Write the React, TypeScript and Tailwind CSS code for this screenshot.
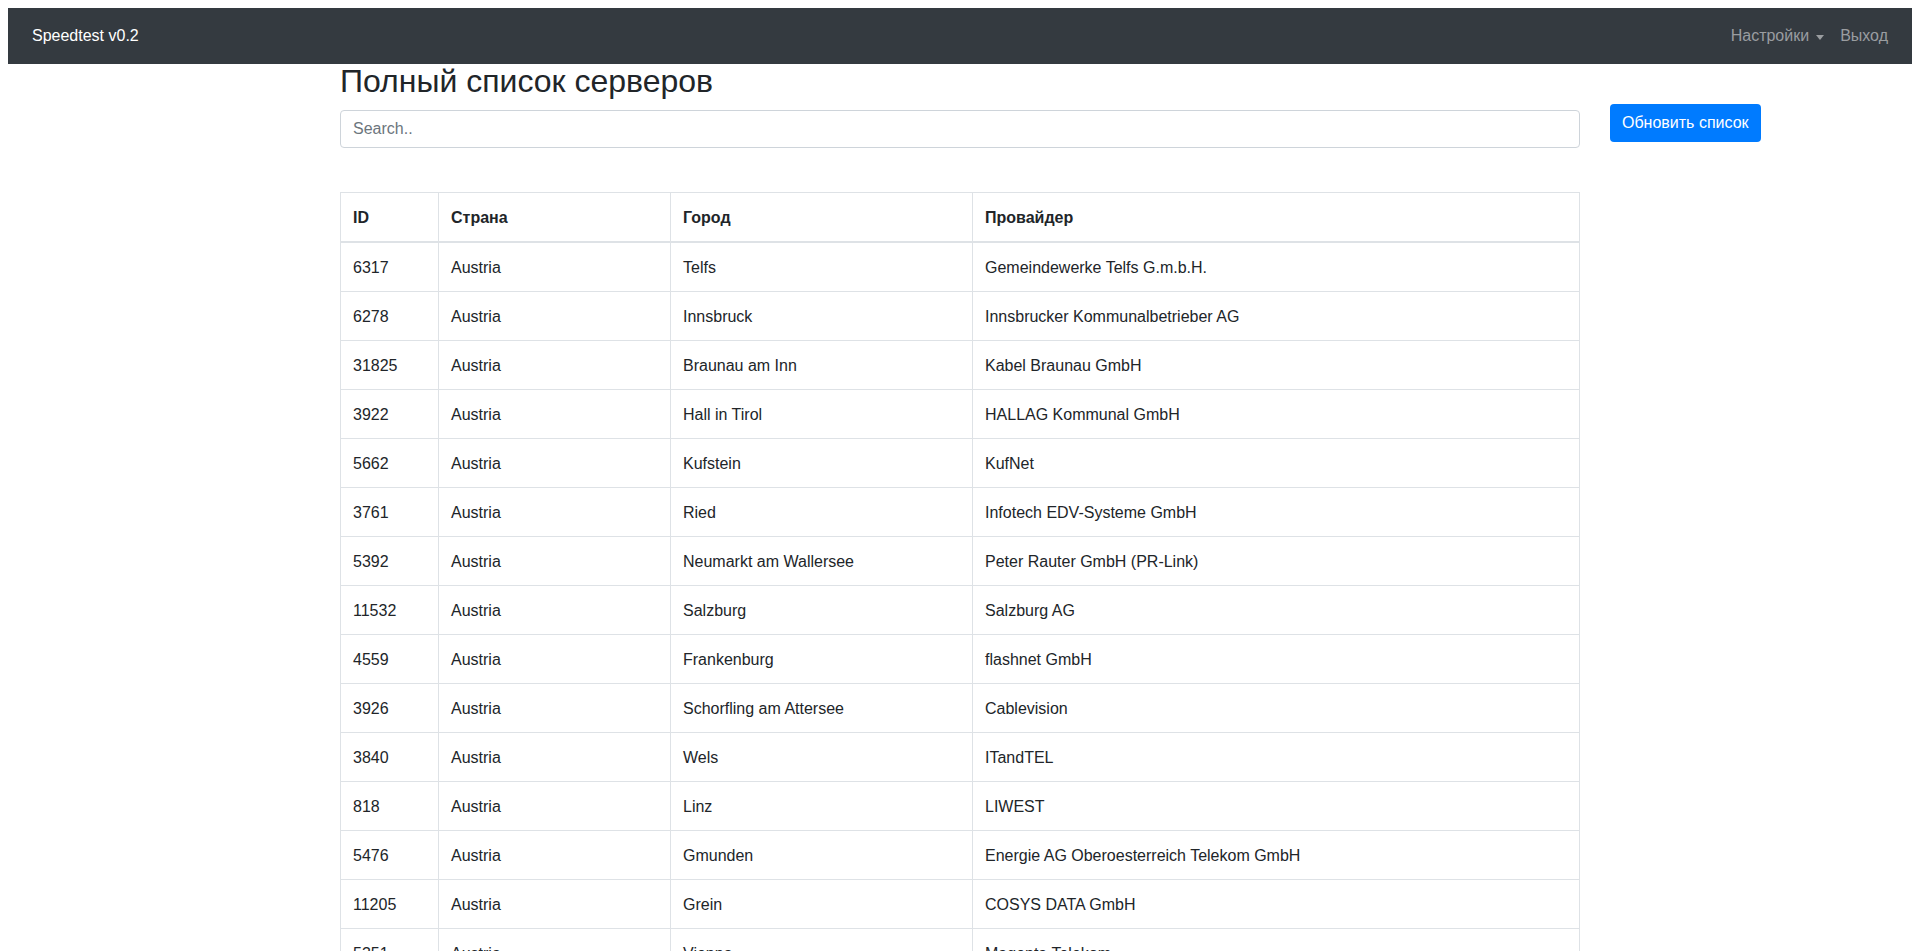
const servers = [
  ['6317', 'Austria', 'Telfs', 'Gemeindewerke Telfs G.m.b.H.'],
  ['6278', 'Austria', 'Innsbruck', 'Innsbrucker Kommunalbetrieber AG'],
  ['31825', 'Austria', 'Braunau am Inn', 'Kabel Braunau GmbH'],
  ['3922', 'Austria', 'Hall in Tirol', 'HALLAG Kommunal GmbH'],
  ['5662', 'Austria', 'Kufstein', 'KufNet'],
  ['3761', 'Austria', 'Ried', 'Infotech EDV-Systeme GmbH'],
  ['5392', 'Austria', 'Neumarkt am Wallersee', 'Peter Rauter GmbH (PR-Link)'],
  ['11532', 'Austria', 'Salzburg', 'Salzburg AG'],
  ['4559', 'Austria', 'Frankenburg', 'flashnet GmbH'],
  ['3926', 'Austria', 'Schorfling am Attersee', 'Cablevision'],
  ['3840', 'Austria', 'Wels', 'ITandTEL'],
  ['818', 'Austria', 'Linz', 'LIWEST'],
  ['5476', 'Austria', 'Gmunden', 'Energie AG Oberoesterreich Telekom GmbH'],
  ['11205', 'Austria', 'Grein', 'COSYS DATA GmbH'],
  ['5351', 'Austria', 'Vienna', 'Magenta Telekom'],
]

function Navbar() {
  return (
    <nav className="mx-2 mt-2 h-14 bg-[#343a40] flex items-center justify-between px-6">
      <a href="#" className="text-white text-base">Speedtest v0.2</a>
      <div className="flex items-center text-base text-[#9a9da0]">
        <a href="#" className="flex items-center px-2">
          Настройки
          <span className="ml-[7px] mt-[2px] w-0 h-0 border-x-[4.5px] border-x-transparent border-t-[5px] border-t-[#9a9da0]" />
        </a>
        <a href="#" className="pl-2">Выход</a>
      </div>
    </nav>
  )
}

export default function App() {
  return (
    <div className="min-h-screen bg-white text-[#212529] font-['Liberation_Sans',Arial,sans-serif]">
      <Navbar />
      <div className="flex ml-[340px] gap-[30px]">
        <div className="w-[1240px]">
          <h2 className="text-[32px] leading-[34px] font-medium mb-3">Полный список серверов</h2>
          <input
            type="text"
            placeholder="Search.."
            className="w-full h-[38px] px-3 border border-[#ced4da] rounded text-base placeholder:text-[#6c757d] outline-none"
          />
          <table className="w-full mt-[44px] table-fixed border border-[#dee2e6] text-base">
            <thead>
              <tr className="text-left">
                <th className="w-[98px] px-3 pt-[13px] pb-[11px] leading-6 font-bold border border-[#dee2e6] border-b-2">ID</th>
                <th className="w-[232px] px-3 pt-[13px] pb-[11px] leading-6 font-bold border border-[#dee2e6] border-b-2">Страна</th>
                <th className="w-[302px] px-3 pt-[13px] pb-[11px] leading-6 font-bold border border-[#dee2e6] border-b-2">Город</th>
                <th className="px-3 pt-[13px] pb-[11px] leading-6 font-bold border border-[#dee2e6] border-b-2">Провайдер</th>
              </tr>
            </thead>
            <tbody>
              {servers.map((s) => (
                <tr key={s[0]}>
                  {s.map((c, i) => (
                    <td key={i} className="px-3 pt-[13px] pb-[11px] leading-6 border border-[#dee2e6]">{c}</td>
                  ))}
                </tr>
              ))}
            </tbody>
          </table>
        </div>
        <div className="pt-10">
          <button className="h-[38px] px-3 rounded bg-[#007bff] text-white text-base">Обновить список</button>
        </div>
      </div>
    </div>
  )
}
